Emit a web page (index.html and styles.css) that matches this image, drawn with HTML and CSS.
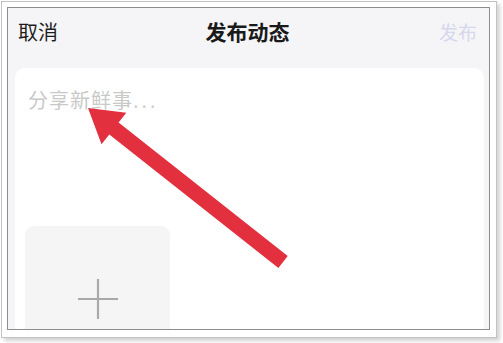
FILE: index.html
```html
<!DOCTYPE html>
<html lang="zh">
<head>
<meta charset="utf-8">
<link rel="stylesheet" href="styles.css">
</head>
<body>
<div class="shot">
  <div class="frame">
    <div class="header">
      <span class="cancel">取消</span>
      <span class="title">发布动态</span>
      <span class="publish">发布</span>
    </div>
    <div class="card">
      <div class="placeholder">分享新鲜事<span class="dots">...</span></div>
      <div class="upload">
        <svg class="plus" width="42" height="42" viewBox="0 0 42 42"><path d="M21 1V41M1 21H41" stroke="#a9a9a9" stroke-width="2.2" fill="none"/></svg>
      </div>
    </div>
  </div>
</div>
<svg class="arrow" width="503" height="343" viewBox="0 0 503 343">
  <polygon points="88,108 126.3,112.8 118.6,122.6 287.7,256.1 278.4,267.9 109.3,134.4 101.5,144.2" fill="#e3303f"/>
</svg>
</body>
</html>
```
FILE: styles.css
```css
html, body {
  margin: 0;
  padding: 0;
  background: #ffffff;
}
body {
  position: relative;
  width: 503px;
  height: 343px;
  overflow: hidden;
  font-family: "Noto Sans CJK SC", "Noto Sans", sans-serif;
}
.shot {
  margin: 1px 0 0 1px;
  box-sizing: border-box;
  width: 496px;
  height: 337px;
  border: 1px solid #c2c2c2;
  padding: 5px 6px 7px 5px;
  background: #ffffff;
  box-shadow: 3px 3px 4px rgba(0, 0, 0, 0.18);
}
.frame {
  box-sizing: border-box;
  width: 483px;
  height: 323px;
  border: 1px solid #8d8d8d;
  background: #f5f5f7;
  display: flex;
  flex-direction: column;
  overflow: hidden;
}
.header {
  height: 46px;
  flex: none;
  display: flex;
  align-items: center;
  justify-content: space-between;
  padding: 0 12px 0 10px;
}
.cancel {
  font-size: 20px;
  color: #1d1d1d;
  width: 60px;
}
.title {
  font-size: 21px;
  font-weight: 700;
  color: #1a1a1a;
}
.publish {
  font-size: 19px;
  color: #d5d7ec;
  width: 60px;
  text-align: right;
}
.card {
  flex: 1;
  margin: 14px 5px 0 7px;
  background: #ffffff;
  border-radius: 10px 10px 0 0;
  padding: 20px 0 0 13px;
}
.placeholder {
  font-size: 20px;
  line-height: 24px;
  color: #c9c9c9;
  letter-spacing: 1px;
}
.dots {
  letter-spacing: 3px;
  color: #d2d2d2;
}
.upload {
  margin: 114px 0 0 -3px;
  width: 145px;
  height: 145px;
  background: #f5f5f5;
  border-radius: 9px;
  display: flex;
  align-items: center;
  justify-content: center;
}
.arrow {
  position: absolute;
  left: 0;
  top: 0;
}
```
